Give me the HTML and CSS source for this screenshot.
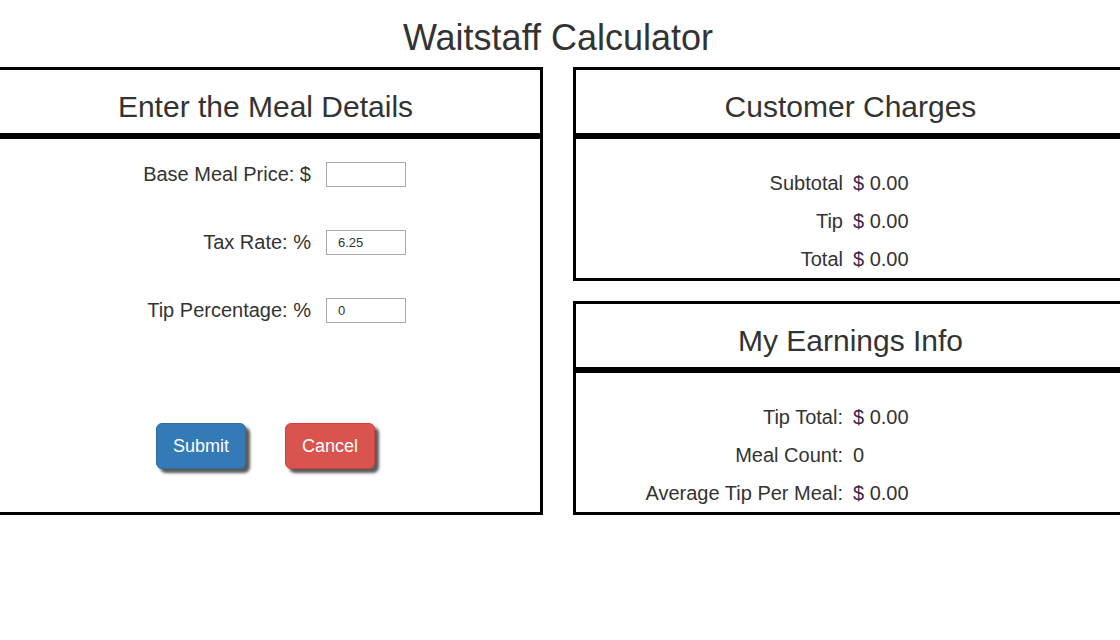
FILE: index.html
```html
<!DOCTYPE html>
<html lang="en">
<head>
<meta charset="utf-8">
<title>Waitstaff Calculator</title>
<link rel="stylesheet" href="styles.css">
</head>
<body>
<div class="page">
  <h1 class="title">Waitstaff Calculator</h1>
  <div class="layout">
    <section class="panel panel-meal">
      <div class="panel-head"><h2>Enter the Meal Details</h2></div>
      <div class="panel-body meal-body">
        <form class="meal-form">
          <div class="field">
            <label for="base">Base Meal Price: $</label>
            <input id="base" type="text" value="">
          </div>
          <div class="field">
            <label for="tax">Tax Rate: %</label>
            <input id="tax" type="text" value="6.25">
          </div>
          <div class="field">
            <label for="tip">Tip Percentage: %</label>
            <input id="tip" type="text" value="0">
          </div>
          <div class="actions">
            <button type="button" class="btn btn-submit">Submit</button>
            <button type="button" class="btn btn-cancel">Cancel</button>
          </div>
        </form>
      </div>
    </section>
    <div class="side">
      <section class="panel">
        <div class="panel-head"><h2>Customer Charges</h2></div>
        <div class="panel-body stats">
          <div class="stat"><span class="stat-label">Subtotal</span><span class="stat-value"><span class="cur">$</span> 0.00</span></div>
          <div class="stat"><span class="stat-label">Tip</span><span class="stat-value"><span class="cur">$</span> 0.00</span></div>
          <div class="stat"><span class="stat-label">Total</span><span class="stat-value"><span class="cur">$</span> 0.00</span></div>
        </div>
      </section>
      <section class="panel">
        <div class="panel-head"><h2>My Earnings Info</h2></div>
        <div class="panel-body stats">
          <div class="stat"><span class="stat-label">Tip Total:</span><span class="stat-value"><span class="cur">$</span> 0.00</span></div>
          <div class="stat"><span class="stat-label">Meal Count:</span><span class="stat-value">0</span></div>
          <div class="stat"><span class="stat-label">Average Tip Per Meal:</span><span class="stat-value"><span class="cur">$</span> 0.00</span></div>
        </div>
      </section>
    </div>
  </div>
</div>
</body>
</html>
```
FILE: styles.css
```css
html, body {
  margin: 0;
  padding: 0;
  overflow: hidden;
  background: #fff;
}

body {
  font-family: "Liberation Sans", Arial, Helvetica, sans-serif;
  color: #333;
  font-size: 14px;
}

.page {
  width: 1140px;
  margin-left: -12px;
}

.title {
  margin: 18px 0 9px;
  font-size: 36px;
  line-height: 1.1;
  font-weight: normal;
  text-align: center;
  color: #333;
}

.layout {
  display: grid;
  grid-template-columns: 555px 555px;
  column-gap: 30px;
}

.side {
  display: flex;
  flex-direction: column;
  gap: 20px;
}

.panel {
  border: 3px solid #000;
  display: flex;
  flex-direction: column;
}

.panel-head {
  border-bottom: 3px solid #000;
}

.panel-head h2 {
  margin: 20px 0 10px;
  font-size: 30px;
  line-height: 33px;
  font-weight: normal;
  text-align: center;
  color: #333;
}

.panel-body {
  border-top: 3px solid #000;
  flex: 1;
}

.meal-body {
  padding-top: 23px;
}

.meal-form {
  display: flex;
  flex-direction: column;
  gap: 43px;
}

.field {
  display: grid;
  grid-template-columns: 320px 80px;
  column-gap: 15px;
  align-items: center;
  height: 25px;
}

.field label {
  text-align: right;
  font-size: 20px;
  line-height: 24px;
  color: #333;
}

.field input {
  box-sizing: border-box;
  width: 80px;
  height: 25px;
  border: 1px solid #a9a9a9;
  padding: 0 11px;
  margin: 0;
  font-family: "Liberation Sans", Arial, sans-serif;
  font-size: 13px;
  color: #333;
  background: #fff;
  outline: none;
}

.actions {
  display: flex;
  justify-content: center;
  gap: 39px;
  margin-top: 57px;
}

.btn {
  box-sizing: border-box;
  height: 46px;
  padding: 10px 16px;
  font-family: "Liberation Sans", Arial, sans-serif;
  font-size: 18px;
  line-height: 24px;
  color: #fff;
  border-radius: 6px;
  border: 1px solid transparent;
  box-shadow: 4px 4px 3px #5a5a5a;
  cursor: pointer;
}

.btn-submit {
  background: #337ab7;
  border-color: #2e6da4;
}

.btn-cancel {
  background: #d9534f;
  border-color: #d43f3a;
}

.stats {
  padding-top: 25px;
}

.stat {
  display: grid;
  grid-template-columns: 267px 1fr;
  column-gap: 10px;
  font-size: 20px;
  line-height: 38px;
  height: 38px;
}

.stat-label {
  text-align: right;
  color: #333;
}

.stat-value {
  color: #333;
}

.cur {
  color: #3e2745;
}
```
